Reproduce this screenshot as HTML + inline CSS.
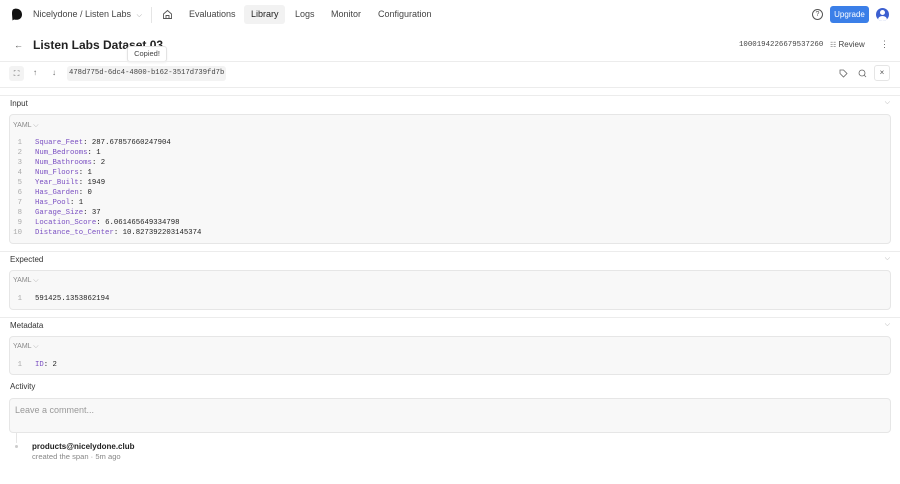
<!DOCTYPE html>
<html><head><style>
*{margin:0;padding:0;box-sizing:border-box}
body{width:900px;height:484px;overflow:hidden;background:#fff;font-family:"Liberation Sans",sans-serif;color:#222;position:relative}
.a{position:absolute;white-space:nowrap}
.mono{font-family:"Liberation Mono",monospace}
.box{position:absolute;left:9px;width:882px;background:#f8f8f8;border:1px solid #e6e6e6;border-radius:4px}
.lbl{position:absolute;left:10px;font-size:8px;color:#333}
.chev{position:absolute;right:10px;font-size:7px;color:#aaa}
.yaml{position:absolute;left:3px;font-size:7px;color:#888}
.code{position:absolute;left:0;font-family:"Liberation Mono",monospace;font-size:7.3px;line-height:10px}
.code .n{display:inline-block;width:12px;text-align:right;margin-right:13px;color:#aaa}
.k{color:#7a4fc2}
.hr{position:absolute;left:0;width:900px;height:1px;background:#ececec}
.nav{font-size:9px}
</style></head><body>
<svg class="a" style="left:11px;top:8px" width="12" height="13" viewBox="0 0 12 13"><path d="M2 1.5C5-0.5 11 1 11 6.5 11 11 7 12.5 3 11.5L1.5 12.5 1 6C1 4 1.2 2.2 2 1.5Z" fill="#111"/></svg>
<div class="a nav" style="left:33px;top:9px;color:#444">Nicelydone / Listen Labs <span style="font-size:7px;color:#999;margin-left:3px">⌵</span></div>
<div class="a" style="left:151px;top:7px;width:1px;height:16px;background:#e5e5e5"></div>
<svg class="a" style="left:162px;top:9px" width="11" height="11" viewBox="0 0 11 11"><path d="M1.5 5L5.5 1.5 9.5 5V9.5H1.5Z M4 9.5V6.5H7V9.5" fill="none" stroke="#555" stroke-width="0.9"/></svg>
<div class="a nav" style="left:189px;top:9px;color:#444">Evaluations</div>
<div class="a" style="left:244px;top:5px;width:41px;height:19px;background:#f2f2f2;border-radius:3px"></div>
<div class="a nav" style="left:251px;top:9px;color:#222">Library</div>
<div class="a nav" style="left:295px;top:9px;color:#444">Logs</div>
<div class="a nav" style="left:331px;top:9px;color:#444">Monitor</div>
<div class="a nav" style="left:378px;top:9px;color:#444">Configuration</div>
<div class="a" style="left:812px;top:9px;width:11px;height:11px;border:1px solid #555;border-radius:50%;font-size:7px;text-align:center;line-height:9px;color:#555">?</div>
<div class="a" style="left:830px;top:6px;width:39px;height:17px;background:#3b7fe8;border-radius:3px;color:#fff;font-size:8px;text-align:center;line-height:17px">Upgrade</div>
<div class="a" style="left:876px;top:8px;width:13px;height:13px;border-radius:50%;background:#3c5fd0;overflow:hidden"><div style="position:absolute;left:4px;top:2px;width:5px;height:5px;border-radius:50%;background:#fff"></div><div style="position:absolute;left:2px;top:8px;width:9px;height:7px;border-radius:50%;background:#fff"></div></div>
<div class="a" style="left:14px;top:40px;font-size:9px;color:#555">←</div>
<div class="a" style="left:33px;top:38px;font-size:12px;font-weight:bold;color:#222">Listen Labs Dataset 03</div>
<div class="a" style="left:127px;top:46px;width:40px;height:16px;background:#fff;border:1px solid #e3e3e3;border-radius:3px;font-size:7.5px;text-align:center;line-height:14px;color:#444;box-shadow:0 1px 2px rgba(0,0,0,.06)">Copied!</div>
<div class="a mono" style="left:739px;top:41px;font-size:7.4px;color:#444">1000194226679537260</div>
<div class="a" style="left:830px;top:40px;font-size:8px;color:#444"><span style="font-size:7px;color:#777">☷</span> Review</div>
<div class="a" style="left:880px;top:39px;font-size:9px;color:#666">⋮</div>
<div class="hr" style="top:61px"></div>
<div class="a" style="left:9px;top:66px;width:15px;height:15px;background:#f3f3f3;border-radius:3px;font-size:8px;text-align:center;line-height:15px;color:#666">⛶</div>
<div class="a" style="left:33px;top:68px;font-size:8px;color:#666">↑</div>
<div class="a" style="left:52px;top:68px;font-size:8px;color:#666">↓</div>
<div class="a mono" style="left:67px;top:66px;height:15px;padding:0 2px;background:#f3f3f3;border-radius:3px;font-size:7.2px;line-height:15px;color:#444">478d775d-6dc4-4800-b162-3517d739fd7b</div>
<svg class="a" style="left:839px;top:69px" width="9" height="9" viewBox="0 0 9 9"><path d="M1 1H4.5L8 4.5 4.5 8 1 4.5Z" fill="none" stroke="#666" stroke-width=".8"/></svg>
<svg class="a" style="left:858px;top:69px" width="9" height="9" viewBox="0 0 9 9"><circle cx="4" cy="4" r="3" fill="none" stroke="#666" stroke-width=".8"/><path d="M6 6L8 8" stroke="#666" stroke-width=".8"/></svg>
<div class="a" style="left:874px;top:65px;width:16px;height:16px;border:1px solid #e5e5e5;border-radius:3px;font-size:8px;text-align:center;line-height:14px;color:#555">×</div>
<div class="hr" style="top:87px"></div>
<div class="hr" style="top:95px"></div>
<div class="lbl" style="top:99px">Input</div><div class="chev" style="top:99px">⌵</div>
<div class="box" style="top:114px;height:130px">
<div class="yaml" style="top:7px">YAML <span style="color:#aaa">⌵</span></div>
<div class="code" style="top:23px">
<div><span class="n">1</span><span class="k">Square_Feet</span>: 287.67857660247904</div>
<div><span class="n">2</span><span class="k">Num_Bedrooms</span>: 1</div>
<div><span class="n">3</span><span class="k">Num_Bathrooms</span>: 2</div>
<div><span class="n">4</span><span class="k">Num_Floors</span>: 1</div>
<div><span class="n">5</span><span class="k">Year_Built</span>: 1949</div>
<div><span class="n">6</span><span class="k">Has_Garden</span>: 0</div>
<div><span class="n">7</span><span class="k">Has_Pool</span>: 1</div>
<div><span class="n">8</span><span class="k">Garage_Size</span>: 37</div>
<div><span class="n">9</span><span class="k">Location_Score</span>: 6.061465649334798</div>
<div><span class="n">10</span><span class="k">Distance_to_Center</span>: 10.827392203145374</div>
</div></div>
<div class="hr" style="top:251px"></div>
<div class="lbl" style="top:255px">Expected</div><div class="chev" style="top:255px">⌵</div>
<div class="box" style="top:270px;height:40px">
<div class="yaml" style="top:6px">YAML <span style="color:#aaa">⌵</span></div>
<div class="code" style="top:23px"><span class="n">1</span>591425.1353862194</div>
</div>
<div class="hr" style="top:317px"></div>
<div class="lbl" style="top:321px">Metadata</div><div class="chev" style="top:321px">⌵</div>
<div class="box" style="top:336px;height:39px">
<div class="yaml" style="top:6px">YAML <span style="color:#aaa">⌵</span></div>
<div class="code" style="top:23px"><span class="n">1</span><span class="k">ID</span>: 2</div>
</div>
<div class="lbl" style="top:382px">Activity</div>
<div class="box" style="top:398px;height:35px"><div class="a" style="left:5px;top:6px;font-size:9px;color:#999">Leave a comment...</div></div>
<div class="a" style="left:16px;top:433px;width:1px;height:10px;background:#e5e5e5"></div>
<div class="a" style="left:15px;top:445px;width:3px;height:3px;border-radius:50%;background:#ccc"></div>
<div class="a" style="left:32px;top:442px;font-size:8px;color:#222;font-weight:bold">products@nicelydone.club</div>
<div class="a" style="left:32px;top:452px;font-size:7.6px;color:#888">created the span · 5m ago</div>
</body></html>
